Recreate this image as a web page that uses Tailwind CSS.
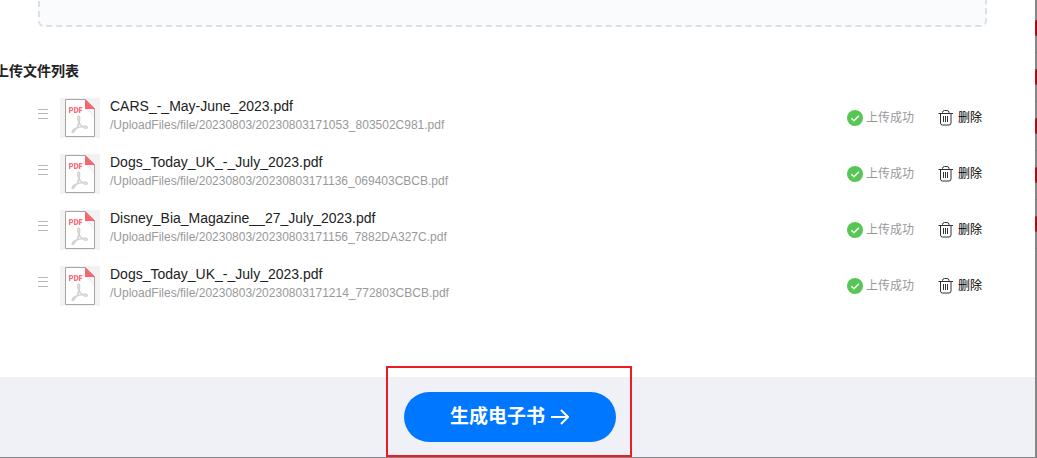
<!DOCTYPE html>
<html lang="zh-CN">
  <head>
    <meta charset="UTF-8" />
    <meta name="viewport" content="width=device-width, initial-scale=1.0" />
    <title>上传文件列表</title>
    <script src="https://cdn.jsdelivr.net/npm/@tailwindcss/browser@4"></script>
  </head>
  <body class="flex h-screen overflow-hidden bg-white font-['Liberation_Sans','Noto_Sans_CJK_SC',sans-serif] text-[#222]">
    <!-- shared icons -->
    <svg class="hidden">
      <symbol id="icon-drag" viewBox="0 0 10 10">
        <path d="M0 .5h10M0 4.5h10M0 9.5h10" stroke="#b8b8b8" fill="none" />
      </symbol>
      <symbol id="icon-pdf" viewBox="0 0 40 40">
        <path d="M0 0h40v40H0z" fill="#f2f2f2" />
        <path d="M5.5 1.5h19.500l9.500 9v28h-29z" fill="#fff" stroke="#aaa4a4" />
        <path d="M25 11h9v9z" fill="#f5f5f5" />
        <path d="M25 1l10 10H25z" fill="#f9656f" />
        <g fill="none" stroke="#fa7078" stroke-width="1.3">
          <path d="M9.6 15V9.6h1.6a1.3 1.3 0 0 1 0 3H9.6" />
          <path d="M14.6 9.6v4.8h1a2.3 2.3 0 0 0 0-4.8z" />
          <path d="M19.6 15V9.6h2.8M19.6 12.3h2.3" />
        </g>
        <path d="M18.700 18c-1.800.2-.8 3.500-.2 5.500M18.700 18c1.500.2 1 3.500.5 6-.8 3.500-3.300 7.500-5.300 9.700-1.200 1.300-2.400.6-1.700-.6 1.300-2.200 6.300-4.100 10.300-4.700 2.200-.3 4.800-.1 4.900.9 0 1.200-2.100 1.200-4.100.1-2-1.100-4-3.500-4.800-5.900" fill="none" stroke="#d3d3d3" stroke-width="1.500" />
      </symbol>
      <symbol id="icon-success" viewBox="0 0 16 16">
        <circle cx="8" cy="8" r="8" fill="#56c754" />
        <path d="M4.300 8.200l2.700 2.500 4.900-5" fill="none" stroke="#fff" stroke-width="1.400" />
      </symbol>
      <symbol id="icon-trash" viewBox="0 0 16 16">
        <path d="M.5 3.500H15M4.500 3.500v-1q0-2 2-2h2.500q2 0 2 2v1M2.500 3.500v9.500q0 2 2 2h6.500q2 0 2-2V3.500M5.500 6v6M7.500 6v6M9.500 6v6" fill="none" stroke="#333" />
      </symbol>
    </svg>

    <main class="flex min-w-0 flex-1 flex-col border-b border-[#858589]">
      <section class="pr-12 pl-[38px]">
        <div class="-mt-3 h-[39px] rounded-md border-2 border-dashed border-[#dcdfe3] bg-[#fafbfd]"></div>
        <h2 class="mt-[34px] -ml-[43px] text-sm leading-5 font-bold">上传文件列表</h2>

        <ul class="mt-[17px] flex flex-col gap-4">
          <li class="flex h-10 items-center">
            <button type="button" aria-label="拖动排序" class="mb-2 mr-3"><svg class="h-[10px] w-[10px]"><use href="#icon-drag" /></svg></button>
            <svg class="h-10 w-10"><use href="#icon-pdf" /></svg>
            <div class="ml-[10px] flex-1 self-start">
              <p class="text-sm leading-4">CARS_-_May-June_2023.pdf</p>
              <p class="mt-[3px] text-xs leading-4 text-[#999]">/UploadFiles/file/20230803/20230803171053_803502C981.pdf</p>
            </div>
            <span class="flex items-center gap-[3px] text-xs leading-4 text-[#999]"><svg class="h-4 w-4"><use href="#icon-success" /></svg>上传成功</span>
            <button type="button" class="mr-[5px] ml-6 flex items-center gap-1 text-xs leading-4 text-black"><svg class="h-4 w-4"><use href="#icon-trash" /></svg>删除</button>
          </li>
          <li class="flex h-10 items-center">
            <button type="button" aria-label="拖动排序" class="mb-2 mr-3"><svg class="h-[10px] w-[10px]"><use href="#icon-drag" /></svg></button>
            <svg class="h-10 w-10"><use href="#icon-pdf" /></svg>
            <div class="ml-[10px] flex-1 self-start">
              <p class="text-sm leading-4">Dogs_Today_UK_-_July_2023.pdf</p>
              <p class="mt-[3px] text-xs leading-4 text-[#999]">/UploadFiles/file/20230803/20230803171136_069403CBCB.pdf</p>
            </div>
            <span class="flex items-center gap-[3px] text-xs leading-4 text-[#999]"><svg class="h-4 w-4"><use href="#icon-success" /></svg>上传成功</span>
            <button type="button" class="mr-[5px] ml-6 flex items-center gap-1 text-xs leading-4 text-black"><svg class="h-4 w-4"><use href="#icon-trash" /></svg>删除</button>
          </li>
          <li class="flex h-10 items-center">
            <button type="button" aria-label="拖动排序" class="mb-2 mr-3"><svg class="h-[10px] w-[10px]"><use href="#icon-drag" /></svg></button>
            <svg class="h-10 w-10"><use href="#icon-pdf" /></svg>
            <div class="ml-[10px] flex-1 self-start">
              <p class="text-sm leading-4">Disney_Bia_Magazine__27_July_2023.pdf</p>
              <p class="mt-[3px] text-xs leading-4 text-[#999]">/UploadFiles/file/20230803/20230803171156_7882DA327C.pdf</p>
            </div>
            <span class="flex items-center gap-[3px] text-xs leading-4 text-[#999]"><svg class="h-4 w-4"><use href="#icon-success" /></svg>上传成功</span>
            <button type="button" class="mr-[5px] ml-6 flex items-center gap-1 text-xs leading-4 text-black"><svg class="h-4 w-4"><use href="#icon-trash" /></svg>删除</button>
          </li>
          <li class="flex h-10 items-center">
            <button type="button" aria-label="拖动排序" class="mb-2 mr-3"><svg class="h-[10px] w-[10px]"><use href="#icon-drag" /></svg></button>
            <svg class="h-10 w-10"><use href="#icon-pdf" /></svg>
            <div class="ml-[10px] flex-1 self-start">
              <p class="text-sm leading-4">Dogs_Today_UK_-_July_2023.pdf</p>
              <p class="mt-[3px] text-xs leading-4 text-[#999]">/UploadFiles/file/20230803/20230803171214_772803CBCB.pdf</p>
            </div>
            <span class="flex items-center gap-[3px] text-xs leading-4 text-[#999]"><svg class="h-4 w-4"><use href="#icon-success" /></svg>上传成功</span>
            <button type="button" class="mr-[5px] ml-6 flex items-center gap-1 text-xs leading-4 text-black"><svg class="h-4 w-4"><use href="#icon-trash" /></svg>删除</button>
          </li>
        </ul>
      </section>

      <footer class="mt-auto flex h-20 items-center justify-center bg-[#f0f1f6] pr-4">
        <div class="relative">
          <button type="button" class="flex h-[50px] w-[212px] items-center justify-center gap-1 rounded-full bg-[#0077ff] text-[19px] font-bold text-white">
            生成电子书
            <svg class="h-5 w-5" viewBox="0 0 20 20" fill="none" stroke="currentColor" stroke-width="2"><path d="M2 10h17M12 3l7 7-7 7" /></svg>
          </button>
          <!-- highlight frame -->
          <div class="pointer-events-none absolute -top-[26px] -right-4 -bottom-[15px] -left-[18px] border-2 border-[#ed1c24]"></div>
        </div>
      </footer>
    </main>

    <!-- sliver of the dimmed side toolbar -->
    <aside class="flex w-[2px] flex-col overflow-hidden bg-[#858585] pt-1">
      <div class="flex h-[49px] shrink-0 items-center border-b border-[#777]"><i class="h-4 w-[2px] rounded-l-full bg-[#a01018]"></i></div>
      <div class="flex h-[49px] shrink-0 items-center border-b border-[#777]"><i class="h-4 w-[2px] rounded-l-full bg-[#a01018]"></i></div>
      <div class="flex h-[49px] shrink-0 items-center border-b border-[#777]"><i class="h-4 w-[2px] rounded-l-full bg-[#a01018]"></i></div>
      <div class="flex h-[49px] shrink-0 items-center border-b border-[#777]"><i class="h-4 w-[2px] rounded-l-full bg-[#a01018]"></i></div>
      <div class="flex h-[49px] shrink-0 items-center border-b border-[#777]"><i class="h-4 w-[2px] rounded-l-full bg-[#a01018]"></i></div>
    </aside>
  </body>
</html>
